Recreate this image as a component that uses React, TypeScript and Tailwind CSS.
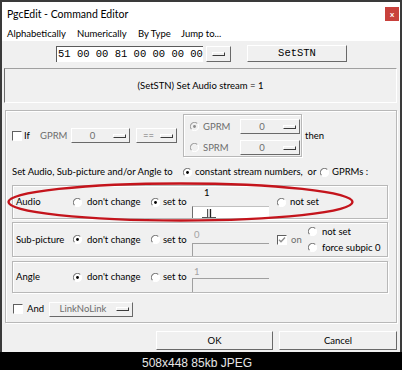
import React from 'react';

const raised = 'border border-t-white border-l-white border-r-[#696969] border-b-[#696969] bg-[#f0f0f0]';
const groove = 'border border-[#b8b8b8] shadow-[inset_1px_1px_0_#ffffff,1px_1px_0_#ffffff]';

function Radio({ on, dim }: { on?: boolean; dim?: boolean }) {
  return (
    <svg width="9" height="9" viewBox="0 0 9 9" className="shrink-0">
      <circle cx="4.5" cy="4.5" r="4" fill={dim ? '#f0f0f0' : '#ffffff'} />
      <path d="M1.6 7.4 A4 4 0 0 1 7.4 1.6" fill="none" stroke={dim ? '#a0a0a0' : '#7a7a7a'} strokeWidth="1.1" />
      <path d="M7.4 1.6 A4 4 0 0 1 1.6 7.4" fill="none" stroke="#ffffff" strokeWidth="1.1" />
      {on && <circle cx="4.5" cy="4.5" r="1.4" fill={dim ? '#8a8a8a' : '#000000'} />}
    </svg>
  );
}

function Check({ on, dim }: { on?: boolean; dim?: boolean }) {
  return (
    <div className="w-[10px] h-[10px] shrink-0 border border-t-[#5f5f5f] border-l-[#5f5f5f] border-r-white border-b-white bg-white flex items-center justify-center">
      {on && (
        <svg width="8" height="8" viewBox="0 0 8 8">
          <path d="M1 3.8 L3 5.8 L7 1.6" fill="none" stroke={dim ? '#8d8d8d' : '#000'} strokeWidth="1.4" />
        </svg>
      )}
    </div>
  );
}

function Ind() {
  return <div className="w-[13px] h-[4px] shrink-0 border border-t-white border-l-white border-r-[#3c3c3c] border-b-[#3c3c3c]" />;
}

function Opt({ label, w, dim }: { label: string; w: string; dim?: boolean }) {
  return (
    <div className={`${w} h-[15px] ${raised} flex items-center shrink-0`}>
      <span className={`flex-1 text-center ${dim ? 'text-[#6d6d6d]' : 'text-black'}`}>{label}</span>
      <div className="mr-[3px]"><Ind /></div>
    </div>
  );
}

export default function App() {
  return (
    <div className="relative w-[402px] h-[370px] bg-black font-['Lato',sans-serif] text-[9.5px] text-black leading-none whitespace-nowrap">
      <div className="w-[402px] h-[352px] border-x-2 border-t-2 border-[#3a3a3a] bg-white flex flex-col">
        {/* title */}
        <div className="h-[24px] flex items-center pl-[5px] shrink-0">
          <span className="text-[10.5px]">PgcEdit - Command Editor</span>
          <div className="ml-auto mr-[1px] w-[14px] h-[14px] bg-[#c8413c] flex items-center justify-center text-white text-[8px] font-bold">x</div>
        </div>
        {/* menu */}
        <div className="h-[15px] flex items-center pl-[5px] shrink-0">
          <span className="w-[70px]">Alphabetically</span>
          <span className="w-[61px]">Numerically</span>
          <span className="w-[43px]">By Type</span>
          <span>Jump to...</span>
        </div>
        {/* body */}
        <div className="flex-1 bg-[#f0f0f0] flex flex-col">
          <div className="mt-[4px] h-[17px] flex items-center shrink-0">
            <div className="ml-[54px] w-[147px] h-[16px] border-t border-l border-[#5a5a5a] bg-white flex items-center pl-[1px] font-['Liberation_Mono',monospace] text-[10.5px]">
              51 00 00 81 00 00 00 00
            </div>
            <div className={`ml-[3px] w-[25px] h-[16px] ${raised} flex items-center justify-center`}>
              <Ind />
            </div>
            <div className={`ml-[16px] w-[100px] h-[17px] ${raised} flex items-center justify-center font-['Liberation_Mono',monospace] text-[10.5px]`}>
              SetSTN
            </div>
          </div>

          <div className="mt-[6px] ml-[2px] w-[393px] h-[35px] shrink-0 border border-t-[#a0a0a0] border-l-[#6f6f6f] border-r-white border-b-white flex items-center justify-center">
            (SetSTN) Set Audio stream = 1
          </div>

          <div className={`mt-[7px] ml-[3px] w-[392px] h-[213px] shrink-0 ${groove} flex flex-col`}>
            {/* If row */}
            <div className="mt-[3px] h-[43px] flex items-center shrink-0">
              <div className="ml-[6px]"><Check /></div>
              <span className="ml-[2px] w-[16px]">If</span>
              <span className="w-[31px] text-[#6d6d6d]">GPRM</span>
              <Opt label="0" w="w-[59px]" dim />
              <div className="ml-[6px]"><Opt label="==" w="w-[41px]" dim /></div>
              <div className={`ml-[6px] w-[119px] h-[43px] ${groove} flex flex-col pt-[4px] gap-[6px] shrink-0`}>
                <div className="flex items-center pl-[6px]">
                  <Radio on dim />
                  <span className="ml-[4px] w-[37px] text-[#6d6d6d]">GPRM</span>
                  <Opt label="0" w="w-[60px]" dim />
                </div>
                <div className="flex items-center pl-[6px]">
                  <Radio dim />
                  <span className="ml-[4px] w-[37px] text-[#6d6d6d]">SPRM</span>
                  <Opt label="0" w="w-[60px]" dim />
                </div>
              </div>
              <span className="ml-[3px]">then</span>
            </div>
            {/* set row */}
            <div className="mt-[8px] h-[14px] flex items-center shrink-0">
              <span className="ml-[6px] w-[171px]">Set Audio, Sub-picture and/or Angle to</span>
              <Radio on />
              <span className="ml-[3px] w-[125px]">constant stream numbers,&nbsp; or</span>
              <Radio />
              <span className="ml-[3px]">GPRMs :</span>
            </div>
            {/* audio */}
            <div className={`mt-[6px] ml-[6px] w-[376px] h-[34px] shrink-0 ${groove} flex items-center`}>
              <span className="w-[60px] pl-[3px]">Audio</span>
              <div className="w-[78px] flex items-center"><Radio /><span className="ml-[5px]">don't change</span></div>
              <div className="w-[41px] flex items-center"><Radio on /><span className="ml-[3px]">set to</span></div>
              <div className="w-[85px] self-stretch flex flex-col">
                <div className="mt-[2px] h-[10px] pl-[12px]">1</div>
                <div className="mt-[8px] w-[77px] h-[12px] border-t border-l border-t-[#c0c0c0] border-l-[#6f6f6f] bg-white flex items-end">
                  <svg width="14" height="10" viewBox="0 0 14 10" className="ml-[9px]">
                    <path d="M0 9.5 H14" stroke="#555" strokeWidth="1" />
                    <path d="M5.5 9.5 V1" stroke="#555" strokeWidth="1" />
                    <path d="M8.5 9.5 V1" stroke="#222" strokeWidth="1.3" />
                    <path d="M7 9.5 V1" stroke="#bbb" strokeWidth="1" />
                  </svg>
                </div>
              </div>
              <div className="flex items-center"><Radio /><span className="ml-[4px]">not set</span></div>
            </div>
            {/* sub-picture */}
            <div className={`mt-[3px] ml-[6px] w-[376px] h-[35px] shrink-0 ${groove} flex items-center`}>
              <span className="w-[60px] pl-[3px]">Sub-picture</span>
              <div className="w-[78px] flex items-center"><Radio on /><span className="ml-[5px]">don't change</span></div>
              <div className="w-[41px] flex items-center"><Radio /><span className="ml-[3px]">set to</span></div>
              <div className="w-[85px] self-stretch flex flex-col">
                <div className="mt-[7px] h-[10px] pl-[2px] text-[#a3a3a3]">0</div>
                <div className="mt-[3px] w-[77px] h-[13px] border-t border-l border-t-[#a0a0a0] border-l-[#a0a0a0] bg-[#f0f0f0]" />
              </div>
              <div className="w-[31px] flex items-center"><Check on dim /><span className="ml-[4px] text-[#6d6d6d]">on</span></div>
              <div className="flex flex-col gap-[6px]">
                <div className="flex items-center"><Radio /><span className="ml-[5px]">not set</span></div>
                <div className="flex items-center"><Radio /><span className="ml-[5px]">force subpic 0</span></div>
              </div>
            </div>
            {/* angle */}
            <div className={`mt-[4px] ml-[6px] w-[376px] h-[32px] shrink-0 ${groove} flex items-center`}>
              <span className="w-[60px] pl-[3px]">Angle</span>
              <div className="w-[78px] flex items-center"><Radio on /><span className="ml-[5px]">don't change</span></div>
              <div className="w-[41px] flex items-center"><Radio /><span className="ml-[3px]">set to</span></div>
              <div className="w-[85px] self-stretch flex flex-col">
                <div className="mt-[5px] h-[10px] pl-[2px] text-[#a3a3a3]">1</div>
                <div className="mt-[1px] w-[77px] h-[15px] border-t border-l border-t-[#a0a0a0] border-l-[#a0a0a0] bg-[#f0f0f0]" />
              </div>
            </div>
            {/* and row */}
            <div className="mt-[8px] h-[16px] flex items-center shrink-0">
              <div className="ml-[7px]"><Check /></div>
              <span className="ml-[4px] w-[22px]">And</span>
              <Opt label="LinkNoLink" w="w-[84px]" dim />
            </div>
          </div>

          <div className="mt-[8px] h-[19px] flex shrink-0">
            <div className={`ml-[154px] w-[117px] h-[19px] ${raised} flex items-center justify-center`}>OK</div>
            <div className={`ml-[6px] w-[118px] h-[19px] ${raised} flex items-center justify-center`}>Cancel</div>
          </div>
        </div>
      </div>
      <div className="h-[18px] flex items-center justify-center pt-[3px] text-[#e6e6e6] font-['Liberation_Sans',sans-serif] text-[12px]">
        <span className="mr-[8px]">508x448 85kb JPEG</span>
      </div>
      <svg className="absolute left-0 top-0 pointer-events-none" width="402" height="370">
        <ellipse cx="180.5" cy="202" rx="172" ry="18.5" fill="none" stroke="#c4141c" strokeWidth="2.4" />
      </svg>
    </div>
  );
}
